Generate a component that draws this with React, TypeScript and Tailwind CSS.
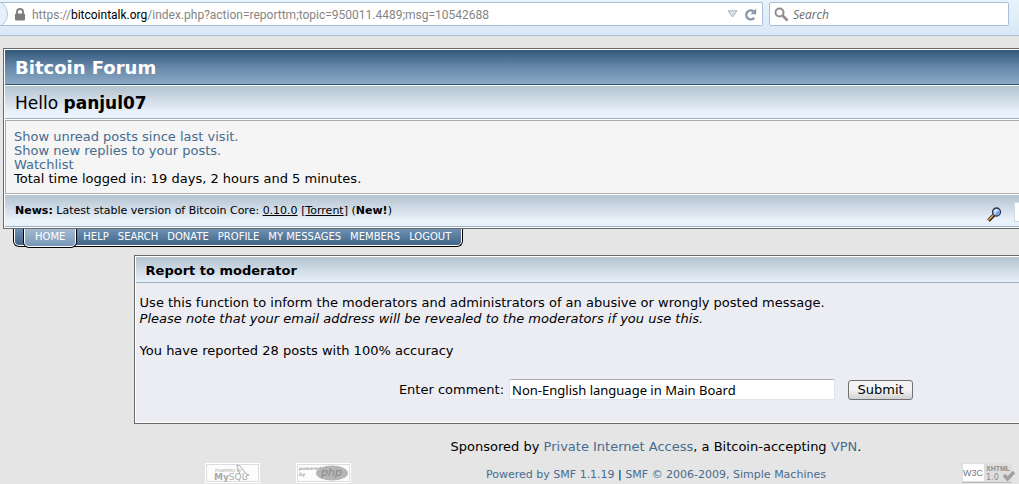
import React from "react";

const menu = ["Help", "Search", "Donate", "Profile", "My Messages", "Members", "Logout"];

const link = "text-[#476c8e]";

function BrowserBar() {
  return (
    <header className="flex h-9 items-start border-b border-[#a9bfd9] bg-linear-to-b from-[#e9f2fb] to-[#d9e8f7] pt-[2px] pr-[10px] font-['Open_Sans','Noto_Sans',sans-serif] text-xs">
      <div className="relative flex h-6 flex-1 items-center overflow-hidden rounded-r-xs border border-l-0 border-[#a9bfd9] bg-white pr-[5px] pl-[14px]">
        <span className="absolute -top-[4px] -left-[22px] h-[30px] w-[30px] rounded-full border border-[#b4c6dc] bg-[#e6f0fa]" />
        <svg width="12" height="13" viewBox="0 0 12 13" className="shrink-0" aria-hidden="true">
          <path d="M3 6V4a3 3 0 0 1 6 0v2" fill="none" stroke="#828282" strokeWidth="2" />
          <rect x="1" y="5.5" width="10" height="7" rx="1" fill="#7c7c7c" />
        </svg>
        <p className="ml-[6px] flex-1 pt-px font-['Roboto','Open_Sans',sans-serif] whitespace-nowrap text-[#858585]">
          https://<span className="text-black">bitcointalk.org</span>/index.php?action=reporttm;topic=950011.4489;msg=10542688
        </p>
        <button aria-label="Show history" className="mr-[6px]">
          <svg width="11" height="8" viewBox="0 0 11 8">
            <path d="M1 .8h9L5.500 7z" fill="#dde3ea" stroke="#a7b2c0" />
          </svg>
        </button>
        <button aria-label="Reload">
          <svg width="13" height="13" viewBox="0 0 13 13">
            <path d="M9.500 3.300A4.500 4.500 0 1 0 10.200 9.800" fill="none" stroke="#8796a8" strokeWidth="2.400" />
            <path d="M12.200 .5V6.300H6.500z" fill="#8796a8" />
          </svg>
        </button>
      </div>
      <label className="ml-[6px] flex h-6 w-[240px] items-center rounded-xs border border-[#a9bfd9] bg-white pl-[4px]">
        <svg width="15" height="15" viewBox="0 0 15 15" aria-hidden="true">
          <circle cx="5.500" cy="5.500" r="4" fill="none" stroke="#8e8e8e" strokeWidth="2" />
          <path d="M8.500 8.500L13.500 13.500" stroke="#8e8e8e" strokeWidth="2.600" />
        </svg>
        <input
          aria-label="Search the web"
          placeholder="Search"
          className="ml-[4px] w-48 bg-transparent pt-px italic outline-none placeholder:text-[#6b6b6b]"
        />
      </label>
    </header>
  );
}

function ForumHeader() {
  return (
    <section className="border border-[#696969] bg-white p-px">
      <h1 className="flex h-[35px] items-center border-b border-[#2f5578] bg-linear-to-b from-[#33597c] via-[#6687a9] to-[#8ba9c4] pt-px pl-[10px] text-lg font-bold text-white">
        Bitcoin Forum
      </h1>
      <p className="mt-px flex h-[33px] items-center border-b border-[#9bafc4] bg-linear-to-b from-[#b3c3d0] to-[#e9f1fa] to-80% pt-[3px] pl-[10px] text-[17px] whitespace-pre">
        Hello <b>panjul07</b>
      </p>
      <div className="mt-px border border-[#adadad] bg-[#f5f5f5] px-2 pt-[9px] pb-[7px] text-[13px] leading-[14px]">
        <p><a href="#unread" className={link}>Show unread posts since last visit.</a></p>
        <p><a href="#replies" className={link}>Show new replies to your posts.</a></p>
        <p><a href="#watchlist" className={link}>Watchlist</a></p>
        <p>Total time logged in: 19 days, 2 hours and 5 minutes.</p>
      </div>
      <div className="mt-px flex h-8 items-center border-b border-[#9bafc4] bg-linear-to-b from-[#b3c3d0] to-[#e9f1fa] to-80% pt-[2px] pl-[10px] text-[11px]">
        <p className="flex-1">
          <b>News:</b> Latest stable version of Bitcoin Core: <a href="#core" className="underline">0.10.0</a>{" "}
          [<a href="#torrent" className="underline">Torrent</a>] (<b>New!</b>)
        </p>
        <form className="flex w-[320px] items-center gap-3" onSubmit={(e) => e.preventDefault()}>
          <svg width="15" height="15" viewBox="0 0 15 15" className="mt-[6px]" aria-hidden="true">
            <path d="M1.500 13.500L7 8" stroke="#1c1710" strokeWidth="3.600" />
            <path d="M1.500 13L6.500 8" stroke="#e9a65a" strokeWidth="1.700" />
            <circle cx="9.500" cy="5" r="4" fill="#a9c7f5" stroke="#26364c" strokeWidth="1.300" />
            <path d="M7.500 4.500l2-2" stroke="#f3f9ff" strokeWidth="1.500" />
            <path d="M9.500 7.500l2.500-2.500" stroke="#5c81d2" strokeWidth="1.200" />
          </svg>
          <input aria-label="Search forum" className="h-5 w-48 border border-[#d5dae1] bg-white" />
        </form>
      </div>
    </section>
  );
}

function Menu() {
  return (
    <nav className="ml-[10px] flex h-[19px] items-start text-[10px] leading-4 uppercase">
      <div className="flex h-[18px] rounded-b-md border border-t-0 border-black bg-white px-px pb-px">
        <div className="flex rounded-b-sm bg-linear-to-b from-[#6f91b3] to-[#416588] pr-[10px] pl-2 text-white">
          <a href="#home" className="h-[19px] shrink-0 rounded-b-md border border-t-0 border-black bg-white px-px pb-px">
            <span className="block h-[17px] rounded-b-sm bg-linear-to-b from-[#a3b9d0] to-[#7898b9] px-[10px]">Home</span>
          </a>
          <div className="flex gap-[9px] pl-[6px]">
            {menu.map((m) => (
              <a key={m} className="whitespace-nowrap" href={"#" + m.toLowerCase().replace(" ", "-")}>{m}</a>
            ))}
          </div>
        </div>
      </div>
    </nav>
  );
}

function ReportPanel() {
  return (
    <section className="mx-auto mt-[7px] w-4/5 border border-[#696969] bg-white p-px text-[13px]">
      <h2 className="flex h-[26px] items-center border-b border-[#9bafc4] bg-linear-to-b from-[#b3c3d0] to-[#e9f1fa] pt-[3px] pl-[10px] font-bold">
        Report to moderator
      </h2>
      <div className="bg-[#ecedf3] px-1 pt-3 pb-[22px] leading-4">
        <p>Use this function to inform the moderators and administrators of an abusive or wrongly posted message.</p>
        <p><i>Please note that your email address will be revealed to the moderators if you use this.</i></p>
        <p className="mt-4">You have reported 28 posts with 100% accuracy</p>
        <form className="mt-5 flex items-center justify-center" onSubmit={(e) => e.preventDefault()}>
          <label htmlFor="comment" className="pt-px">Enter comment:</label>
          <input
            id="comment"
            defaultValue="Non-English language in Main Board"
            className="ml-[5px] h-[21px] w-[326px] rounded-xs border border-[#dfe3ea] border-t-[#abadb3] bg-white px-[2px] font-['Noto_Sans',sans-serif] text-[13px] outline-none"
          />
          <button className="ml-[13px] h-5 w-[65px] rounded-[3px] border border-[#707070] bg-linear-to-b from-[#f3f3f3] from-50% to-[#d0d0d0] pt-px text-[13px] leading-4">
            Submit
          </button>
        </form>
      </div>
    </section>
  );
}

function Footer() {
  return (
    <footer className="pt-[14px]">
      <p className="text-center text-[13px] leading-[18px]">
        Sponsored by <a href="#pia" className={link}>Private Internet Access</a>, a Bitcoin-accepting{" "}
        <a href="#vpn" className={link}>VPN</a>.
      </p>
      <div className="mt-[6px] grid grid-cols-[1fr_600px_1fr] items-center">
        <div className="flex items-center justify-end gap-9 pr-[5px]">
          <a href="#mysql" aria-label="Powered by MySQL">
            <svg width="55" height="20" viewBox="0 0 55 20" className="font-['DejaVu_Sans']">
              <rect x=".5" y=".5" width="54" height="19" fill="#fcfcfc" stroke="#fff" />
              <rect x="1.500" y="1.500" width="52" height="17" fill="none" stroke="#ddd" />
              <text x="10" y="9" fontSize="4" fill="#aaa">POWERED BY</text>
              <text x="9" y="17" fontSize="9" fontWeight="bold" fill="#aaa">My<tspan fontWeight="normal">SQL</tspan></text>
              <path d="M32 2c5 1 6 5 8 8l4 2-3 1 1 3M32 2c0 3 2 6 3 9" fill="none" stroke="#aaa" />
            </svg>
          </a>
          <a href="#php" aria-label="Powered by PHP">
            <svg width="55" height="20" viewBox="0 0 55 20" className="font-['DejaVu_Sans'] italic">
              <rect x=".5" y=".5" width="54" height="19" fill="#fcfcfc" stroke="#fff" />
              <rect x="1.500" y="1.500" width="52" height="17" fill="none" stroke="#ddd" />
              <text x="3" y="6.500" fontSize="4.500" fontWeight="bold" fill="#aaa">powered</text>
              <text x="3" y="12.500" fontSize="4.500" fontWeight="bold" fill="#aaa">by</text>
              <ellipse cx="36" cy="10" rx="16" ry="7.500" fill="#b5b5b5" />
              <text x="25" y="13" fontSize="11" fill="#888">php</text>
            </svg>
          </a>
        </div>
        <p className="pt-[5px] text-center text-[11px] leading-4">
          <a href="#smf" className={link}>Powered by SMF 1.1.19</a> |{" "}
          <a href="#simplemachines" className={link}>SMF © 2006-2009, Simple Machines</a>
        </p>
        <a href="#xhtml" aria-label="Valid XHTML 1.0" className="pl-[6px]">
          <svg width="56" height="20" viewBox="0 0 56 20">
            <rect width="50" height="19" fill="#dedede" />
            <path d="M0 19.500H50" stroke="#bbb" />
            <rect x="1" y="1" width="21" height="17" fill="#fff" />
            <text x="1" y="13" fontSize="9" fill="#777" className="font-['Liberation_Sans']">W3C</text>
            <text x="24" y="8" fontSize="7" fontWeight="bold" fill="#8c8c8c" className="font-['Liberation_Sans']">XHTML</text>
            <text x="24" y="17" fontSize="8" fill="#8c8c8c" className="font-['DejaVu_Sans']">1.0</text>
            <path d="M42 12l3.500 4L52 9" fill="none" stroke="#a0a0a0" strokeWidth="3.500" />
          </svg>
        </a>
      </div>
    </footer>
  );
}

export default function App() {
  return (
    <div className="min-h-screen overflow-hidden bg-[#e5e5e6] text-black">
      <BrowserBar />
      <main className="min-w-[1312px] px-[3px] pt-3 font-['DejaVu_Sans',Verdana,sans-serif]">
        <ForumHeader />
        <Menu />
        <ReportPanel />
        <Footer />
      </main>
    </div>
  );
}
